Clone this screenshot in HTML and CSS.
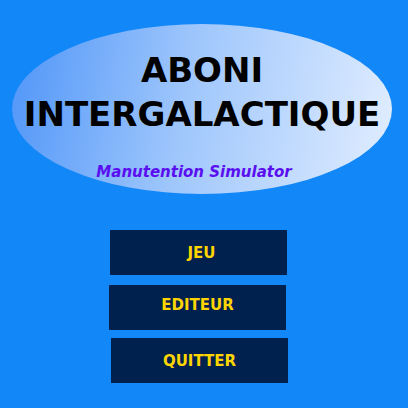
FILE: index.html
```html
<!DOCTYPE html>
<html lang="fr">
<head>
<meta charset="utf-8">
<title>Aboni Intergalactique</title>
<link rel="stylesheet" href="styles.css">
</head>
<body>
<div class="screen">
  <header class="logo">
    <h1 class="title">ABONI<br>INTERGALACTIQUE</h1>
    <p class="subtitle">Manutention Simulator</p>
  </header>
  <nav class="menu">
    <button class="btn btn-jeu">JEU</button>
    <button class="btn btn-editeur">EDITEUR</button>
    <button class="btn btn-quitter">QUITTER</button>
  </nav>
</div>
</body>
</html>
```
FILE: styles.css
```css
html, body {
  margin: 0;
  padding: 0;
  background: #1287f7;
}
.screen {
  width: 408px;
  height: 408px;
  display: flex;
  flex-direction: column;
  font-family: "DejaVu Sans", "Open Sans", sans-serif;
}
.logo {
  margin: 24px 0 0 12px;
  width: 380px;
  height: 170px;
  border-radius: 50%;
  background: linear-gradient(100deg, #4f95f8 0%, #9ec6fc 45%, #e2eeff 100%);
  display: flex;
  flex-direction: column;
  align-items: center;
  box-sizing: border-box;
  padding-top: 24px;
}
.title {
  margin: 0;
  font-size: 34px;
  line-height: 44px;
  font-weight: bold;
  text-align: center;
  color: #000;
}
.subtitle {
  margin: 27px 16px 0 0;
  font-size: 15px;
  line-height: 18px;
  font-weight: bold;
  font-style: italic;
  color: #5a0ff0;
}
.menu {
  margin-top: 36px;
  display: flex;
  flex-direction: column;
}
.btn {
  width: 177px;
  height: 45px;
  border: 0;
  padding: 0;
  background: #00204d;
  color: #ffd500;
  font-family: "DejaVu Sans", sans-serif;
  font-weight: bold;
  font-size: 15px;
}
.btn-jeu { margin-left: 110px; padding-left: 6px; }
.btn-editeur { margin: 10px 0 0 109px; padding-bottom: 6px; }
.btn-quitter { margin: 8px 0 0 111px; }
```
